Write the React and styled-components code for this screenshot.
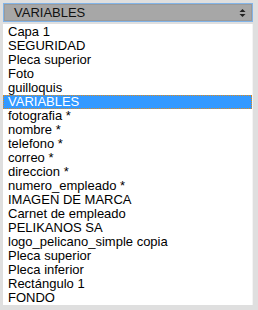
import React from "react";
import styled, { createGlobalStyle } from "styled-components";

const items = [
  "Capa 1",
  "SEGURIDAD",
  "Pleca superior",
  "Foto",
  "guilloquis",
  "VARIABLES",
  "fotografia *",
  "nombre *",
  "telefono *",
  "correo *",
  "direccion *",
  "numero_empleado *",
  "IMAGEN DE MARCA",
  "Carnet de empleado",
  "PELIKANOS SA",
  "logo_pelicano_simple copia",
  "Pleca superior",
  "Pleca inferior",
  "Rectángulo 1",
  "FONDO",
];

const Global = createGlobalStyle`
  html, body {
    margin: 0;
    padding: 0;
    background: #dfdfdf;
  }
  body {
    font-family: "Liberation Sans", Arial, sans-serif;
  }
`;

function App() {
  return (
    <>
      <Global />
      <Panel>
        <Picker>
          <span>VARIABLES</span>
          <Arrows viewBox="0 0 7 10">
            <path d="M3.5 1 L6.5 4 L0.5 4 Z" fill="#222" />
            <path d="M3.5 9 L6.5 6 L0.5 6 Z" fill="#222" />
          </Arrows>
        </Picker>
        <List>
          {items.map((t, i) => (
            <Row key={i} $selected={i === 5}>
              {t}
            </Row>
          ))}
        </List>
      </Panel>
    </>
  );
}

export default App;

const Panel = styled.div`
  width: 258px;
  height: 310px;
  box-sizing: border-box;
  padding: 3px 5px 5px 3px;
  display: flex;
  flex-direction: column;
  gap: 2px;
`;

const Picker = styled.div`
  height: 19px;
  flex-shrink: 0;
  box-sizing: border-box;
  border: 1px solid #82b4e8;
  box-shadow: inset 0 0 0 1px #9a9a9a;
  background: #a7a7a7;
  display: flex;
  align-items: center;
  justify-content: space-between;
  padding: 0 6px 0 10px;
  font-size: 13px;
  color: #111;
`;

const Arrows = styled.svg`
  width: 7px;
  height: 10px;
`;

const List = styled.div`
  flex: 1;
  min-height: 0;
  background: #fff;
  border-right: 1px solid #f4f4f4;
  padding-top: 1px;
  font-size: 13px;
  color: #000;
`;

const Row = styled.div`
  height: 14px;
  line-height: 14px;
  padding-left: 5px;
  white-space: nowrap;
  background: ${(p) => (p.$selected ? "#3399ff" : "transparent")};
  color: ${(p) => (p.$selected ? "#fff" : "#000")};
  outline: ${(p) => (p.$selected ? "1px dotted #e08a1a" : "none")};
  outline-offset: -1px;
`;
